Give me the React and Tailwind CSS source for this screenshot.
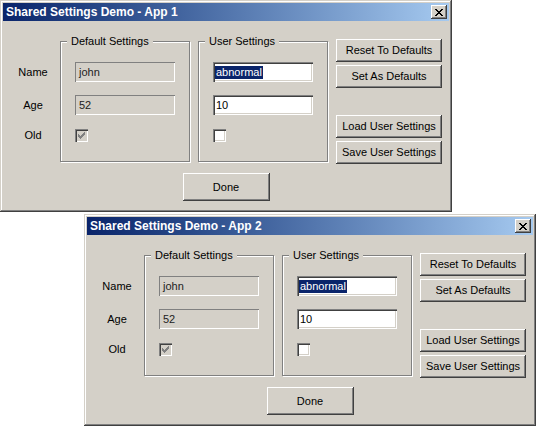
import React from 'react';

const FONT = { fontFamily: '"Liberation Sans", Arial, sans-serif' };

const raised =
    'shadow-[inset_-1px_-1px_0_#404040,inset_1px_1px_0_#ffffff,inset_-2px_-2px_0_#808080,inset_2px_2px_0_#d4d0c8]';

const Button = ({ children, className = '' }) => (
    <div className={`flex items-center justify-center bg-[#d4d0c8] text-[11px] text-black ${raised} ${className}`}>
        {children}
    </div>
);

const TextBox = ({ value, disabled, selected }) => (
    <div
        className={`flex h-[20px] w-[100px] items-center text-[11px] ${
            disabled
                ? 'bg-[#d4d0c8] pl-[3px] text-[#222] shadow-[inset_1px_1px_0_#808080,inset_-1px_-1px_0_#ffffff]'
                : 'bg-white pl-[2px] text-black shadow-[inset_1px_1px_0_#808080,inset_2px_2px_0_#404040,inset_-1px_-1px_0_#ffffff,inset_-2px_-2px_0_#d4d0c8]'
        }`}
    >
        {selected ? (
            <span className="bg-[#0a246a] px-[1px] leading-[13px] text-white">{value}</span>
        ) : (
            <span className="pl-[1px]">{value}</span>
        )}
    </div>
);

const CheckBox = ({ checked, disabled }) => (
    <div
        className={`flex h-[13px] w-[13px] items-center justify-center shadow-[inset_1px_1px_0_#808080,inset_2px_2px_0_#404040,inset_-1px_-1px_0_#ffffff,inset_-2px_-2px_0_#d4d0c8] ${
            disabled ? 'bg-[#d4d0c8]' : 'bg-white'
        }`}
    >
        {checked && (
            <svg width="7" height="7" viewBox="0 0 7 7" shapeRendering="crispEdges">
                <path d="M0 2h1v1h1v1h1v-1h1v-1h1v-1h1v-1h1v3h-1v1h-1v1h-1v1h-1v1h-1v-1h-1v-1h-1z" fill={disabled ? '#808080' : '#000'} />
            </svg>
        )}
    </div>
);

const GroupBox = ({ title, children }) => (
    <div className="relative mt-[2px] h-[121px] w-[130px] border border-[#808080] pl-[14px] pt-[20px] shadow-[1px_1px_0_#ffffff,inset_1px_1px_0_#ffffff]">
        <span className="absolute -top-[7px] left-[6px] bg-[#d4d0c8] px-[4px] text-[11px] leading-[13px] text-black">
            {title}
        </span>
        {children}
    </div>
);

const Window = ({ title, className }) => (
    <div
        className={`absolute flex h-[212px] w-[452px] flex-col bg-[#d4d0c8] p-[3px] shadow-[inset_-1px_-1px_0_#404040,inset_1px_1px_0_#d4d0c8,inset_-2px_-2px_0_#808080,inset_2px_2px_0_#ffffff] ${className}`}
        style={FONT}
    >
        {/* title bar */}
        <div className="flex h-[18px] items-center justify-between bg-gradient-to-r from-[#0a246a] to-[#a6caf0] pl-[3px] pr-[2px]">
            <span className="text-[12px] font-bold leading-none text-white">{title}</span>
            <div className={`flex h-[14px] w-[16px] items-center justify-center bg-[#d4d0c8] ${raised}`}>
                <svg width="8" height="7" viewBox="0 0 8 7" shapeRendering="crispEdges">
                    <path d="M0 0h2v1h1v1h2v-1h1v-1h2v1h-1v1h-1v1h-1v1h1v1h1v1h1v1h-2v-1h-1v-1h-2v1h-1v1h-2v-1h1v-1h1v-1h1v-1h-1v-1h-1v-1h-1z" fill="#000" />
                </svg>
            </div>
        </div>

        {/* body */}
        <div className="flex flex-1 flex-col">
            <div className="mt-[18px] flex items-start pl-[5px]">
                <div className="flex w-[50px] flex-col pt-[23px] text-[11px] text-black">
                    <div className="flex h-[20px] items-center justify-center">Name</div>
                    <div className="mt-[13px] flex h-[20px] items-center justify-center">Age</div>
                    <div className="mt-[14px] flex h-[13px] items-center justify-center">Old</div>
                </div>
                <div className="ml-[2px]">
                    <GroupBox title="Default Settings">
                        <TextBox value="john" disabled />
                        <div className="mt-[13px]">
                            <TextBox value="52" disabled />
                        </div>
                        <div className="mt-[14px]">
                            <CheckBox checked disabled />
                        </div>
                    </GroupBox>
                </div>
                <div className="ml-[8px]">
                    <GroupBox title="User Settings">
                        <TextBox value="abnormal" selected />
                        <div className="mt-[13px]">
                            <TextBox value="10" />
                        </div>
                        <div className="mt-[14px]">
                            <CheckBox />
                        </div>
                    </GroupBox>
                </div>
                <div className="ml-[8px] flex w-[106px] flex-col">
                    <Button className="h-[23px]">Reset To Defaults</Button>
                    <Button className="mt-[3px] h-[23px]">Set As Defaults</Button>
                    <Button className="mt-[27px] h-[23px]">Load User Settings</Button>
                    <Button className="mt-[3px] h-[23px]">Save User Settings</Button>
                </div>
            </div>
            <div className="mt-[9px] flex justify-center">
                <Button className="h-[28px] w-[87px]">Done</Button>
            </div>
        </div>
    </div>
);

export default function App() {
    return (
        <div className="relative h-[434px] w-[543px] overflow-hidden bg-white">
            <Window title="Shared Settings Demo - App 1" className="left-0 top-0" />
            <Window title="Shared Settings Demo - App 2" className="left-[84px] top-[214px]" />
        </div>
    );
}
